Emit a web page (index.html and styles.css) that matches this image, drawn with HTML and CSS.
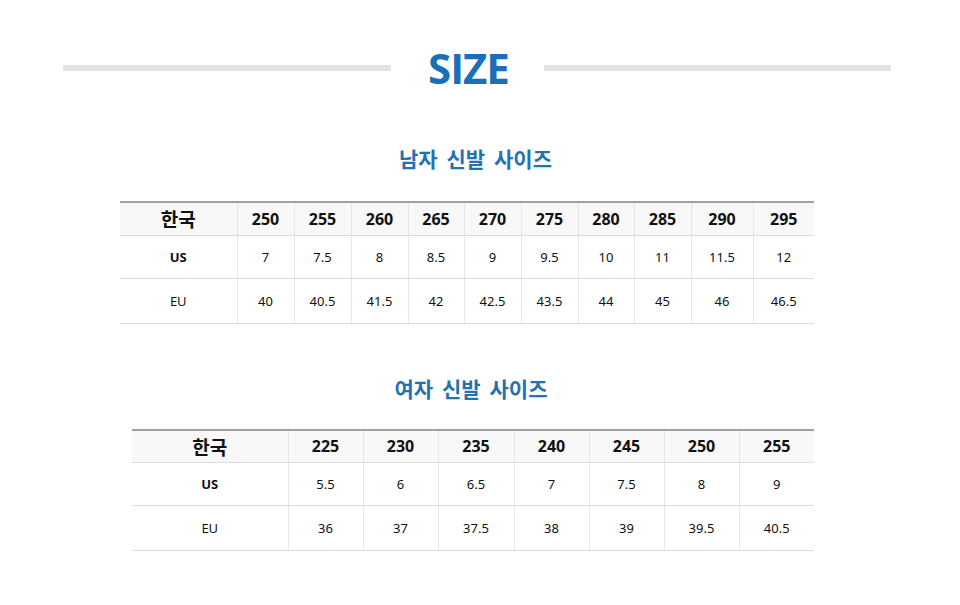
FILE: index.html
```html
<!DOCTYPE html>
<html lang="ko">
<head>
<meta charset="utf-8">
<title>SIZE</title>
<link rel="stylesheet" href="styles.css">
</head>
<body>
<div class="page">
  <header class="hero">
    <span class="rule rule-left"></span>
    <h1 class="hero-title">SIZE</h1>
    <span class="rule rule-right"></span>
  </header>

  <section class="block block-men">
    <h2 class="block-title">남자 신발 사이즈</h2>
    <table class="size-table men">
      <colgroup>
        <col class="c-label">
        <col class="c57"><col class="c57"><col class="c57"><col class="c56"><col class="c57">
        <col class="c57"><col class="c56"><col class="c57"><col class="c62"><col class="c61">
      </colgroup>
      <tr class="row-head">
        <th class="lbl-kr">한국</th>
        <th>250</th><th>255</th><th>260</th><th>265</th><th>270</th>
        <th>275</th><th>280</th><th>285</th><th>290</th><th>295</th>
      </tr>
      <tr class="row-us">
        <td class="lbl-us">US</td>
        <td>7</td><td>7.5</td><td>8</td><td>8.5</td><td>9</td>
        <td>9.5</td><td>10</td><td>11</td><td>11.5</td><td>12</td>
      </tr>
      <tr class="row-eu">
        <td>EU</td>
        <td>40</td><td>40.5</td><td>41.5</td><td>42</td><td>42.5</td>
        <td>43.5</td><td>44</td><td>45</td><td>46</td><td>46.5</td>
      </tr>
    </table>
  </section>

  <section class="block block-women">
    <h2 class="block-title">여자 신발 사이즈</h2>
    <table class="size-table women">
      <colgroup>
        <col class="c-label-w">
        <col class="c75"><col class="c75"><col class="c76"><col class="c75">
        <col class="c75"><col class="c75"><col class="c75">
      </colgroup>
      <tr class="row-head">
        <th class="lbl-kr">한국</th>
        <th>225</th><th>230</th><th>235</th><th>240</th><th>245</th><th>250</th><th>255</th>
      </tr>
      <tr class="row-us">
        <td class="lbl-us">US</td>
        <td>5.5</td><td>6</td><td>6.5</td><td>7</td><td>7.5</td><td>8</td><td>9</td>
      </tr>
      <tr class="row-eu">
        <td>EU</td>
        <td>36</td><td>37</td><td>37.5</td><td>38</td><td>39</td><td>39.5</td><td>40.5</td>
      </tr>
    </table>
  </section>
</div>
</body>
</html>
```

FILE: styles.css
```css
* { box-sizing: border-box; }

html, body {
  margin: 0;
  padding: 0;
  background: #ffffff;
}

body {
  font-family: "Noto Sans", "Noto Sans CJK KR", sans-serif;
  color: #111;
}

.page {
  width: 960px;
  padding-top: 38px;
}

.hero {
  display: flex;
  align-items: center;
  height: 60px;
  padding-left: 63px;
}

.rule {
  display: block;
  height: 6px;
  background: #e4e4e4;
}

.rule-left { width: 328px; }
.rule-right { width: 347px; }

.hero-title {
  margin: 0 37px 0 37px;
  width: 79px;
  text-align: center;
  font-family: "Open Sans", "Noto Sans", sans-serif;
  font-weight: 700;
  font-size: 42px;
  line-height: 60px;
  letter-spacing: -1px;
  color: #1a70b8;
}

.block-title {
  margin: 0;
  font-family: "Noto Sans CJK KR", sans-serif;
  font-weight: 700;
  font-size: 21px;
  line-height: 28px;
  word-spacing: 3px;
  color: #2471b2;
  text-align: center;
}

.block-men {
  margin-top: 46px;
}
.block-men .block-title { padding-right: 9px; }

.block-women {
  margin-top: 50px;
}
.block-women .block-title { padding-right: 18px; }

.size-table {
  border-collapse: collapse;
  table-layout: fixed;
  border-top: 2px solid #a0a0a0;
  font-family: "Noto Sans", "Noto Sans CJK KR", sans-serif;
  font-size: 13px;
  color: #111;
}

.size-table.men {
  margin: 29px 0 0 120px;
  width: 694px;
}

.size-table.women {
  margin: 27px 0 0 132px;
  width: 682px;
}

.c-label { width: 117px; }
.c-label-w { width: 156px; }
.c56 { width: 56px; }
.c57 { width: 57px; }
.c61 { width: 61px; }
.c62 { width: 62px; }
.c75 { width: 75px; }
.c76 { width: 76px; }

.size-table th,
.size-table td {
  padding: 0;
  text-align: center;
  border-bottom: 1px solid #dcdcdc;
  border-left: 1px solid #e6e6e6;
}

.size-table th:first-child,
.size-table td:first-child {
  border-left: none;
}

.row-head th {
  height: 33px;
  background: #f8f8f8;
  font-size: 16px;
  font-weight: 700;
}

.row-head .lbl-kr {
  font-family: "Noto Sans CJK KR", sans-serif;
  font-size: 19px;
  font-weight: 700;
}

.row-us td { height: 43px; }
.row-eu td { height: 45px; }

.lbl-us { font-weight: 700; }
```
